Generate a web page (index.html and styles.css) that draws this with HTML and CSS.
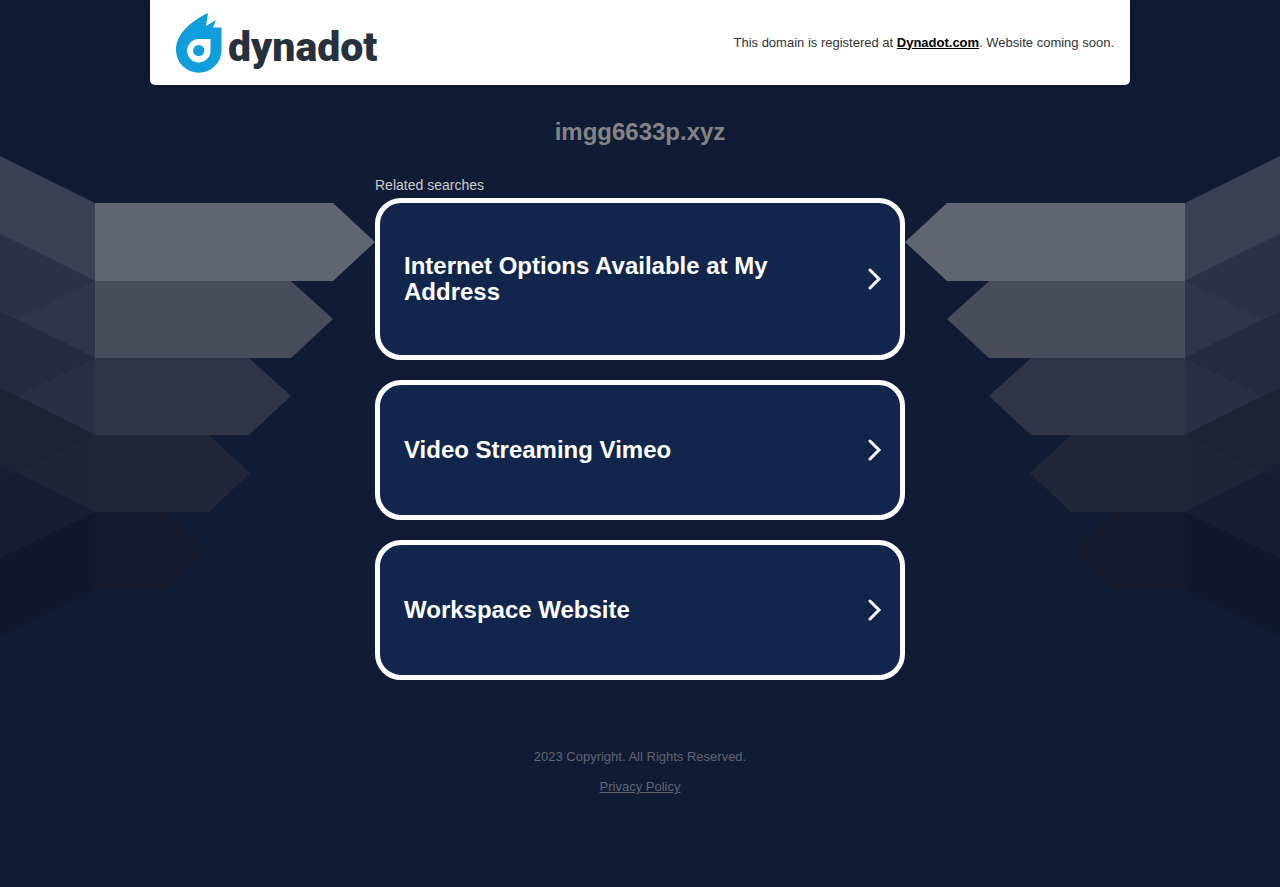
FILE: index.html
```html
<!DOCTYPE html>
<html lang="en">
<head>
<meta charset="utf-8">
<meta name="viewport" content="width=device-width, initial-scale=1">
<title>imgg6633p.xyz</title>
<link rel="stylesheet" href="styles.css">
</head>
<body>
<svg class="backdrop" viewBox="0 0 1280 480" aria-hidden="true">
  <defs>
    <g id="arrows" transform="translate(0 -156)">
      <path fill="#12172c" d="M0 558L95 512V590L0 635z"/>
      <path fill="#181d32" d="M0 464L95 512L0 558z"/>
      <path fill="#1d2235" d="M0 388L95 435V512L0 464z"/>
      <path fill="#1a2034" d="M0 464L18 473L0 482z"/>
      <path fill="#202538" d="M95 435V512L18 473z"/>
      <path fill="#262a3e" d="M0 312L95 358V435L0 388z"/>
      <path fill="#2b2f43" d="M95 358V435L18 396z"/>
      <path fill="#2d3145" d="M0 234L95 281V358L0 312z"/>
      <path fill="#313549" d="M95 281V358L18 319z"/>
      <path fill="#3c4053" d="M0 156L95 203V281L0 234z"/>
      <path fill="#616471" d="M95 203H333L375 242L333 281H95z"/>
      <path fill="#494c5b" d="M95 281H291L333 319L291 358H95z"/>
      <path fill="#303447" d="M95 358H249L291 396L249 435H95z"/>
      <path fill="#212638" d="M95 435H209L250 473L209 512H95z"/>
      <path fill="#151a2e" d="M95 512H167L208 551L167 590H95z"/>
    </g>
  </defs>
  <use href="#arrows"/>
  <use href="#arrows" transform="translate(1280 0) scale(-1 1)"/>
</svg>

<header class="banner">
  <div class="logo">
    <svg class="flame" viewBox="0 0 46 61" aria-hidden="true">
      <path fill="#0f9ddb" d="M32 1L30 14L40 8L37 15.500H45.500V38A22.700 22.700 0 0 1 0 38C0 22 15 9 32 1z"/>
      <path fill="#fff" d="M22.500 27H34.500V38.500A11.700 11.700 0 1 1 22.500 27z"/>
      <circle cx="22.700" cy="38.500" r="5.600" fill="#0f9ddb"/>
    </svg>
    <span class="wordmark">dynadot</span>
  </div>
  <p class="notice">This domain is registered at <a href="#">Dynadot.com</a>. Website coming soon.</p>
</header>

<main class="content">
  <h1 class="domain">imgg6633p.xyz</h1>
  <p class="caption">Related searches</p>
  <nav class="links">
    <a class="card" href="#"><span class="label">Internet Options Available at My Address</span><svg class="chevron" viewBox="0 0 14 22" aria-hidden="true"><path d="M2 2L11 11L2 20"/></svg></a>
    <a class="card" href="#"><span class="label">Video Streaming Vimeo</span><svg class="chevron" viewBox="0 0 14 22" aria-hidden="true"><path d="M2 2L11 11L2 20"/></svg></a>
    <a class="card" href="#"><span class="label">Workspace Website</span><svg class="chevron" viewBox="0 0 14 22" aria-hidden="true"><path d="M2 2L11 11L2 20"/></svg></a>
  </nav>
</main>

<footer class="footer">
  <p>2023 Copyright. All Rights Reserved.</p>
  <p><a href="#">Privacy Policy</a></p>
</footer>
</body>
</html>
```
FILE: styles.css
```css
* {
  box-sizing: border-box;
}

body {
  position: relative;
  margin: 0;
  min-height: 100vh;
  overflow-x: hidden;
  background: #101c36;
  font-family: "Liberation Sans", Arial, sans-serif;
}

h1,
p {
  margin: 0;
}

.backdrop {
  position: absolute;
  z-index: -1;
  top: 156px;
  left: 50%;
  width: 1280px;
  transform: translateX(-50%);
}

.banner {
  display: flex;
  align-items: center;
  justify-content: space-between;
  max-width: 980px;
  margin: 0 auto;
  padding: 12px 16px 12px 26px;
  border-radius: 0 0 5px 5px;
  background: #fff;
  box-shadow: 0 0 12px rgba(0, 0, 0, 0.2);
}

.logo {
  display: flex;
  align-items: center;
  gap: 6px;
}

.flame {
  width: 46px;
  height: 61px;
}

.wordmark {
  padding-top: 9px;
  color: #27303d;
  font: 900 41px/52px Roboto, sans-serif;
}

.notice {
  color: #333;
  font-size: 13px;
  line-height: 16px;
}

.notice a {
  color: #000;
  font-weight: bold;
}

.content {
  max-width: 530px;
  margin: 0 auto;
  padding-top: 32px;
}

.domain {
  color: #848484;
  font-size: 24px;
  line-height: 30px;
  text-align: center;
}

.caption {
  padding: 30px 0 5px;
  color: #ccc;
  font-size: 14px;
  line-height: 16px;
}

.links {
  display: flex;
  flex-direction: column;
  gap: 20px;
}

.card {
  display: flex;
  align-items: center;
  justify-content: space-between;
  gap: 60px;
  min-height: 140px;
  padding: 50px 18px 50px 24px;
  border: 5px solid #fff;
  border-radius: 26px;
  background: #12264d;
  color: #fff;
  font-size: 24px;
  font-weight: bold;
  line-height: 26px;
  text-decoration: none;
}

.chevron {
  flex: none;
  width: 14px;
  height: 22px;
  fill: none;
  stroke: #fff;
  stroke-width: 3;
  stroke-linecap: round;
}

.footer {
  display: grid;
  gap: 14px;
  padding: 69px 0 92px;
  color: #626472;
  font-size: 13px;
  line-height: 16px;
  text-align: center;
}

.footer a {
  color: inherit;
}
```
